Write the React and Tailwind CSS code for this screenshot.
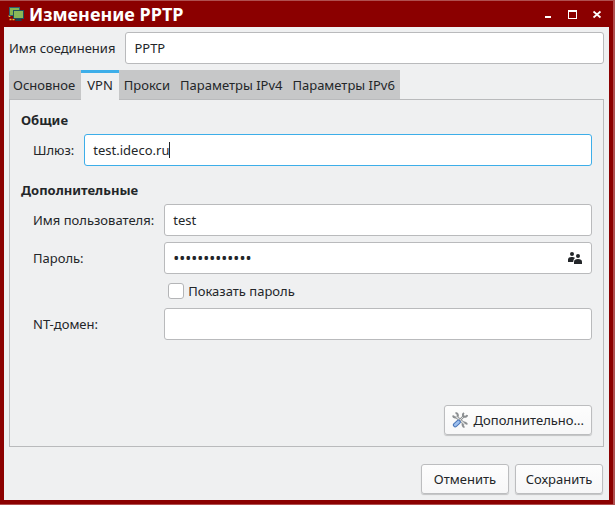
import { useState } from "react";

const tabs = ["Основное", "VPN", "Прокси", "Параметры IPv4", "Параметры IPv6"];

const field =
  "h-8 w-full min-w-0 rounded-[3px] border border-[#b9babc] bg-white px-2 text-[13px] text-[#232629] outline-none";
const button =
  "flex h-[30px] items-center justify-center rounded-[3px] border border-[#bcbdbf] bg-linear-to-b from-[#fdfdfd] to-[#f7f7f8] shadow-[0_1px_1px_#00000030]";

function AppIcon() {
  return (
    <svg width="16" height="16" viewBox="0 0 16 16" aria-hidden="true">
      <path d="M1.500 9v2.500M1.500 13.500H7" fill="none" stroke="#f0b840" strokeWidth="1.600" strokeDasharray="2 1" />
      <rect x="1.500" y="1.500" width="10" height="8" fill="#86b450" stroke="#2f6070" />
      <rect x="5.500" y="4.500" width="10" height="8" fill="#8ab858" stroke="#1f4f5c" />
      <path d="M8 13h5l1 2H7z" fill="#1f3f4a" />
    </svg>
  );
}

function UsersIcon() {
  return (
    <svg width="14" height="12" viewBox="0 0 14 12" fill="#232629" aria-hidden="true">
      <circle cx="4" cy="2" r="2" />
      <path d="M0 10V7.500C0 5.800 1.500 5 3.500 5 5 5 6.200 5.300 7 6 5.900 6.800 5.300 8 5.200 10z" />
      <circle cx="10" cy="4" r="2" />
      <path d="M6 12V9.800C6 8 7.500 7 10 7s4 1 4 2.800V12z" />
    </svg>
  );
}

function ToolsIcon() {
  return (
    <svg width="16" height="16" viewBox="0 0 16 16" fill="none" aria-hidden="true">
      <path d="M4 4.500 12.500 12" stroke="#8b8e91" strokeWidth="3" />
      <path d="M1 3.500C1.500 6 4.500 6 5.500 4.500S5.500 1 3.500 1" stroke="#8b8e91" strokeWidth="2" />
      <path d="M15 12.500c-.5-2-3-2.500-4-1.200s0 3.700 1.500 3.700" stroke="#8b8e91" strokeWidth="2" />
      <path d="M4 4.500 12.500 12" stroke="#dcdedf" strokeWidth="1.400" />
      <path d="m8 8 4-4" stroke="#8b8e91" strokeWidth="2.400" />
      <path d="m8 8 4-4" stroke="#dadcdd" strokeWidth="1" />
      <path d="M12 1c-1.500 1-1.500 3 0 3.500S15 4.500 15.300 3" stroke="#8b8e91" strokeWidth="2" />
      <path d="m6.500 10-3.300 3" stroke="#4a76b8" strokeWidth="4.600" strokeLinecap="round" />
      <path d="m6.500 10-3.300 3" stroke="#9dbfee" strokeWidth="2.600" strokeLinecap="round" />
    </svg>
  );
}

function TitleBar() {
  return (
    <header className="flex h-[26px] items-center px-1 text-white">
      <AppIcon />
      <h1 className="ml-[5px] flex-1 text-[18px] leading-6 font-bold">Изменение PPTP</h1>
      <div className="flex gap-2">
        <button type="button" aria-label="Свернуть" className="flex size-4 items-center justify-center">
          <svg width="10" height="10" viewBox="0 0 10 10" fill="white"><path d="M1 7h6v2H1z" /></svg>
        </button>
        <button type="button" aria-label="Развернуть" className="flex size-4 items-center justify-center">
          <svg width="10" height="10" viewBox="0 0 10 10" fill="white"><path fillRule="evenodd" d="M0 1h9v9H0zM1 3v6h7V3z" /></svg>
        </button>
        <button type="button" aria-label="Закрыть" className="flex size-4 items-center justify-center">
          <svg width="10" height="10" viewBox="0 0 10 10" stroke="white" strokeWidth="1.700"><path d="m1.500 2.500 7 6M8.500 2.500l-7 6" /></svg>
        </button>
      </div>
    </header>
  );
}

export default function App() {
  const [active, setActive] = useState("VPN");
  const [visible, setVisible] = useState(false);

  return (
    <div className="flex min-h-screen flex-col border-t border-r-2 border-b border-[#b05050] bg-[#8b0000] px-1 pb-1 font-['Noto_Sans',sans-serif] text-[13px] leading-4 text-[#232629]">
      <TitleBar />
      <main className="flex flex-1 flex-col bg-[#eff0f1] px-[5px] pt-[5px] pb-[6px]">
        <div className="flex items-center gap-[10px]">
          <label htmlFor="name" className="shrink-0">Имя соединения</label>
          <input id="name" className={field} defaultValue="PPTP" />
        </div>

        <div role="tablist" className="mt-[6px] flex h-[29px]">
          {tabs.map((tab) => (
            <button
              key={tab}
              type="button"
              role="tab"
              aria-selected={tab === active}
              onClick={() => setActive(tab)}
              className={
                tab === active
                  ? "z-10 -mb-px border-t-3 border-[#3daee9] bg-[#eff0f1] px-[6px] pb-[3px]"
                  : "border-t border-[#c6c7c8] bg-[#c6c7c8] px-[5px] first:rounded-tl-[3px] first:pr-[6px] first:pl-1"
              }
            >
              {tab}
            </button>
          ))}
        </div>

        <section role="tabpanel" className="flex flex-1 flex-col border border-[#b9babc] px-[11px] pt-3 pb-[11px]">
          <h2 className="font-bold">Общие</h2>
          <div className="mt-[6px] flex items-center gap-[10px] pl-3">
            <label htmlFor="gateway">Шлюз:</label>
            <div className="flex h-8 flex-1 items-center rounded-[3px] border border-[#3daee9] bg-white px-2">
              <input
                id="gateway"
                className="field-sizing-content min-w-0 bg-transparent text-[13px] outline-none"
                defaultValue="test.ideco.ru"
              />
              <span className="h-4 w-px bg-[#232629]" />
            </div>
          </div>

          <h2 className="mt-4 font-bold">Дополнительные</h2>
          <div className="mt-[6px] grid grid-cols-[auto_1fr] items-center gap-x-[10px] gap-y-[6px] pl-3">
            <label htmlFor="user">Имя пользователя:</label>
            <input id="user" className={field} defaultValue="test" />

            <label htmlFor="password">Пароль:</label>
            <div className="flex h-8 items-center rounded-[3px] border border-[#b9babc] bg-white px-2">
              <input
                id="password"
                type={visible ? "text" : "password"}
                className={`min-w-0 flex-1 bg-transparent outline-none ${visible ? "text-[13px]" : "text-[16px]"}`}
                defaultValue="passwordvalue"
              />
              <button type="button" aria-label="Хранение пароля" className="mr-px"><UsersIcon /></button>
            </div>

            <label className="col-start-2 flex h-[22px] items-center gap-1 pl-1">
              <input
                type="checkbox"
                checked={visible}
                onChange={() => setVisible(!visible)}
                className="size-4 appearance-none rounded-[3px] border border-[#b4b5b7] bg-white checked:bg-[#3daee9]"
              />
              Показать пароль
            </label>

            <label htmlFor="domain">NT-домен:</label>
            <input id="domain" className={field} />
          </div>

          <div className="mt-auto flex justify-end">
            <button type="button" className={`${button} gap-[6px] px-[7px]`}>
              <ToolsIcon />
              Дополнительно...
            </button>
          </div>
        </section>

        <footer className="mt-[17px] flex justify-end gap-[6px] pr-px">
          <button type="button" className={`${button} w-[88px]`}>Отменить</button>
          <button type="button" className={`${button} w-[88px]`}>Сохранить</button>
        </footer>
      </main>
    </div>
  );
}
